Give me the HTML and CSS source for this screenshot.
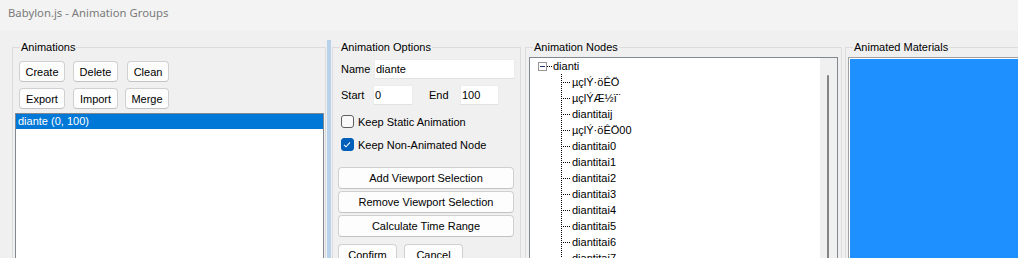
FILE: index.html
```html
<!DOCTYPE html>
<html>
<head>
<meta charset="utf-8">
<link rel="stylesheet" href="styles.css">
</head>
<body>
<div class="titlebar">Babylon.js - Animation Groups</div>
<div class="main">
  <fieldset class="group g-anim">
    <legend>Animations</legend>
    <div class="btn-row row1">
      <button class="btn b-create">Create</button>
      <button class="btn b-delete">Delete</button>
      <button class="btn b-clean">Clean</button>
    </div>
    <div class="btn-row row2">
      <button class="btn b-export">Export</button>
      <button class="btn b-import">Import</button>
      <button class="btn b-merge">Merge</button>
    </div>
    <div class="listbox">
      <div class="list-item selected">diante (0, 100)</div>
    </div>
  </fieldset>
  <div class="splitter"></div>
  <fieldset class="group g-opts">
    <legend>Animation Options</legend>
    <div class="opts-body">
      <div class="field-row name-row">
        <span class="lbl l-name">Name</span>
        <div class="textbox t-name">diante</div>
      </div>
      <div class="field-row range-row">
        <span class="lbl l-start">Start</span>
        <div class="textbox t-start">0</div>
        <span class="lbl l-end">End</span>
        <div class="textbox t-end">100</div>
      </div>
      <div class="check-row c1">
        <span class="checkbox"></span>
        <span class="check-label">Keep Static Animation</span>
      </div>
      <div class="check-row c2">
        <span class="checkbox checked"><svg width="13" height="13" viewBox="0 0 13 13"><path d="M3.2 6.8 L5.4 9 L9.8 4.2" fill="none" stroke="#ffffff" stroke-width="1.1"/></svg></span>
        <span class="check-label">Keep Non-Animated Node</span>
      </div>
      <button class="btn wide first">Add Viewport Selection</button>
      <button class="btn wide">Remove Viewport Selection</button>
      <button class="btn wide">Calculate Time Range</button>
      <div class="btn-row confirm-row">
        <button class="btn b-confirm">Confirm</button>
        <button class="btn b-cancel">Cancel</button>
      </div>
    </div>
  </fieldset>
  <fieldset class="group g-nodes">
    <legend>Animation Nodes</legend>
    <div class="tree">
      <div class="tree-body">
        <div class="node root">
          <span class="expander"><span class="minus"></span></span>
          <span class="hconn"></span>
          <span class="node-text">dianti</span>
        </div>
        <div class="node child"><span class="conn"></span><span class="node-text">µçlÝ·öÊÖ</span></div>
        <div class="node child"><span class="conn"></span><span class="node-text">µçlÝÆ½ï¨</span></div>
        <div class="node child"><span class="conn"></span><span class="node-text">diantitaij</span></div>
        <div class="node child"><span class="conn"></span><span class="node-text">µçlÝ·öÊÖ00</span></div>
        <div class="node child"><span class="conn"></span><span class="node-text">diantitai0</span></div>
        <div class="node child"><span class="conn"></span><span class="node-text">diantitai1</span></div>
        <div class="node child"><span class="conn"></span><span class="node-text">diantitai2</span></div>
        <div class="node child"><span class="conn"></span><span class="node-text">diantitai3</span></div>
        <div class="node child"><span class="conn"></span><span class="node-text">diantitai4</span></div>
        <div class="node child"><span class="conn"></span><span class="node-text">diantitai5</span></div>
        <div class="node child"><span class="conn"></span><span class="node-text">diantitai6</span></div>
        <div class="node child"><span class="conn"></span><span class="node-text">diantitai7</span></div>
      </div>
      <div class="vscroll"><div class="thumb"></div></div>
    </div>
  </fieldset>
  <fieldset class="group g-mats">
    <legend>Animated Materials</legend>
    <div class="mat-box"></div>
  </fieldset>
</div>
</body>
</html>
```
FILE: styles.css
```css
* { box-sizing: border-box; }
html, body { margin: 0; padding: 0; }
body {
  width: 1018px;
  height: 258px;
  overflow: hidden;
  background: #f0f0f0;
  font-family: "Liberation Sans", Arial, sans-serif;
  font-size: 11px;
  color: #000;
}
.titlebar {
  height: 31px;
  background: #f3f3f3;
  padding-left: 8px;
  font-family: "Noto Sans", "Open Sans", sans-serif;
  font-size: 11.3px;
  line-height: 26px;
  color: #7a7a7a;
}
.main {
  display: flex;
  align-items: flex-start;
  padding-top: 10px;
  padding-left: 12px;
  height: 227px;
  overflow: hidden;
}
.group {
  margin: 0;
  padding: 0;
  border: 1px solid #dcdcdc;
  min-width: 0;
  height: 240px;
  flex: none;
}
.group legend {
  padding: 0 1px;
  margin-left: 7px;
  line-height: 13px;
  height: 13px;
}
.g-anim { width: 314px; }
.splitter {
  flex: none;
  width: 4px;
  height: 240px;
  margin: -1px 1px 0 1px;
  background: #b9d1ea;
}
.g-opts { width: 189px; }
.g-nodes { width: 317px; margin-left: 4px; }
.g-mats { width: 220px; margin-left: 3px; }

.btn {
  display: block;
  height: 21px;
  padding: 0;
  margin: 0;
  font: inherit;
  color: #000;
  background: #fdfdfd;
  border: 1px solid #d0d0d0;
  border-bottom-color: #c2c2c2;
  border-radius: 4px;
  text-align: center;
}
.btn-row { display: flex; }
.g-anim .btn-row { margin-left: 6px; }
.row1 { margin-top: 7px; }
.row2 { margin-top: 6px; }
.b-create { width: 46px; }
.b-delete { width: 45px; margin-left: 8px; }
.b-clean { width: 42px; margin-left: 9px; }
.b-export { width: 46px; }
.b-import { width: 45px; margin-left: 8px; }
.b-merge { width: 44px; margin-left: 7px; }

.listbox {
  margin: 4px 0 0 2px;
  width: 309px;
  height: 160px;
  background: #fff;
  border: 1px solid #828790;
}
.list-item {
  height: 15px;
  line-height: 15px;
  padding-left: 2px;
}
.list-item.selected { background: #0078d7; color: #fff; }

.opts-body { padding-left: 5px; }
.field-row {
  display: flex;
  align-items: center;
  height: 20px;
  margin-left: 3px;
}
.name-row { margin-top: 5px; }
.range-row { margin-top: 6px; }
.lbl { flex: none; }
.l-name { width: 33px; }
.l-start { width: 32px; }
.l-end { width: 31px; margin-left: 16px; }
.textbox {
  height: 20px;
  background: #fff;
  border: 1px solid #ececec;
  border-bottom-color: #e2e2e2;
  padding-left: 1px;
  line-height: 18px;
  flex: none;
}
.t-name { width: 141px; }
.t-start { width: 40px; }
.t-end { width: 39px; }

.check-row {
  display: flex;
  align-items: center;
  height: 13px;
  margin-left: 3px;
}
.c1, .c2 { margin-top: 10px; }
.checkbox {
  flex: none;
  width: 13px;
  height: 13px;
  border: 1px solid #5f5f5f;
  border-radius: 3px;
  background: #f9f9f9;
  display: flex;
}
.checkbox.checked {
  background: #005fb8;
  border-color: #005fb8;
}
.checkbox svg { margin: -1px 0 0 -1px; }
.check-label { margin-left: 4px; }

.wide { width: 176px; height: 22px; margin-top: 2px; }
.wide.first { margin-top: 16px; }
.confirm-row { margin-top: 7px; }
.b-confirm { width: 59px; height: 22px; }
.b-cancel { width: 59px; height: 22px; margin-left: 7px; }

.tree {
  display: flex;
  margin: 3px 0 0 3px;
  width: 309px;
  height: 210px;
  border: 1px solid #828790;
}
.tree-body {
  flex: none;
  width: 290px;
  background: #fff;
}
.vscroll {
  flex: none;
  width: 17px;
  background: #f0f0f0;
  padding: 17px 0 0 7px;
}
.thumb {
  width: 2px;
  height: 200px;
  background: #858585;
  border-radius: 1px;
}
.node {
  display: flex;
  align-items: center;
  height: 16px;
  white-space: nowrap;
}
.root { padding-left: 8px; }
.expander {
  flex: none;
  width: 9px;
  height: 9px;
  border: 1px solid #979797;
  background: #fff;
  display: flex;
  align-items: center;
  justify-content: center;
}
.minus {
  width: 5px;
  height: 1px;
  background: #1d3370;
}
.hconn {
  flex: none;
  width: 5px;
  height: 1px;
  background-image: repeating-linear-gradient(to right, #000 0 1px, transparent 1px 2px);
}
.root .node-text { margin-left: 1px; }
.child { padding-left: 31px; }
.conn {
  flex: none;
  width: 10px;
  height: 16px;
  background-image:
    repeating-linear-gradient(to bottom, #000 0 1px, transparent 1px 2px),
    repeating-linear-gradient(to right, #000 0 1px, transparent 1px 2px);
  background-size: 1px 100%, 100% 1px;
  background-position: 0 0, 0 8px;
  background-repeat: no-repeat;
}
.child .node-text { margin-left: 1px; }

.mat-box {
  margin: 3px 0 0 2px;
  width: 220px;
  height: 210px;
  border: 1px solid #a0a0a0;
  background: #1e90ff;
  box-shadow: inset 0 0 0 1px #fff;
}
```
